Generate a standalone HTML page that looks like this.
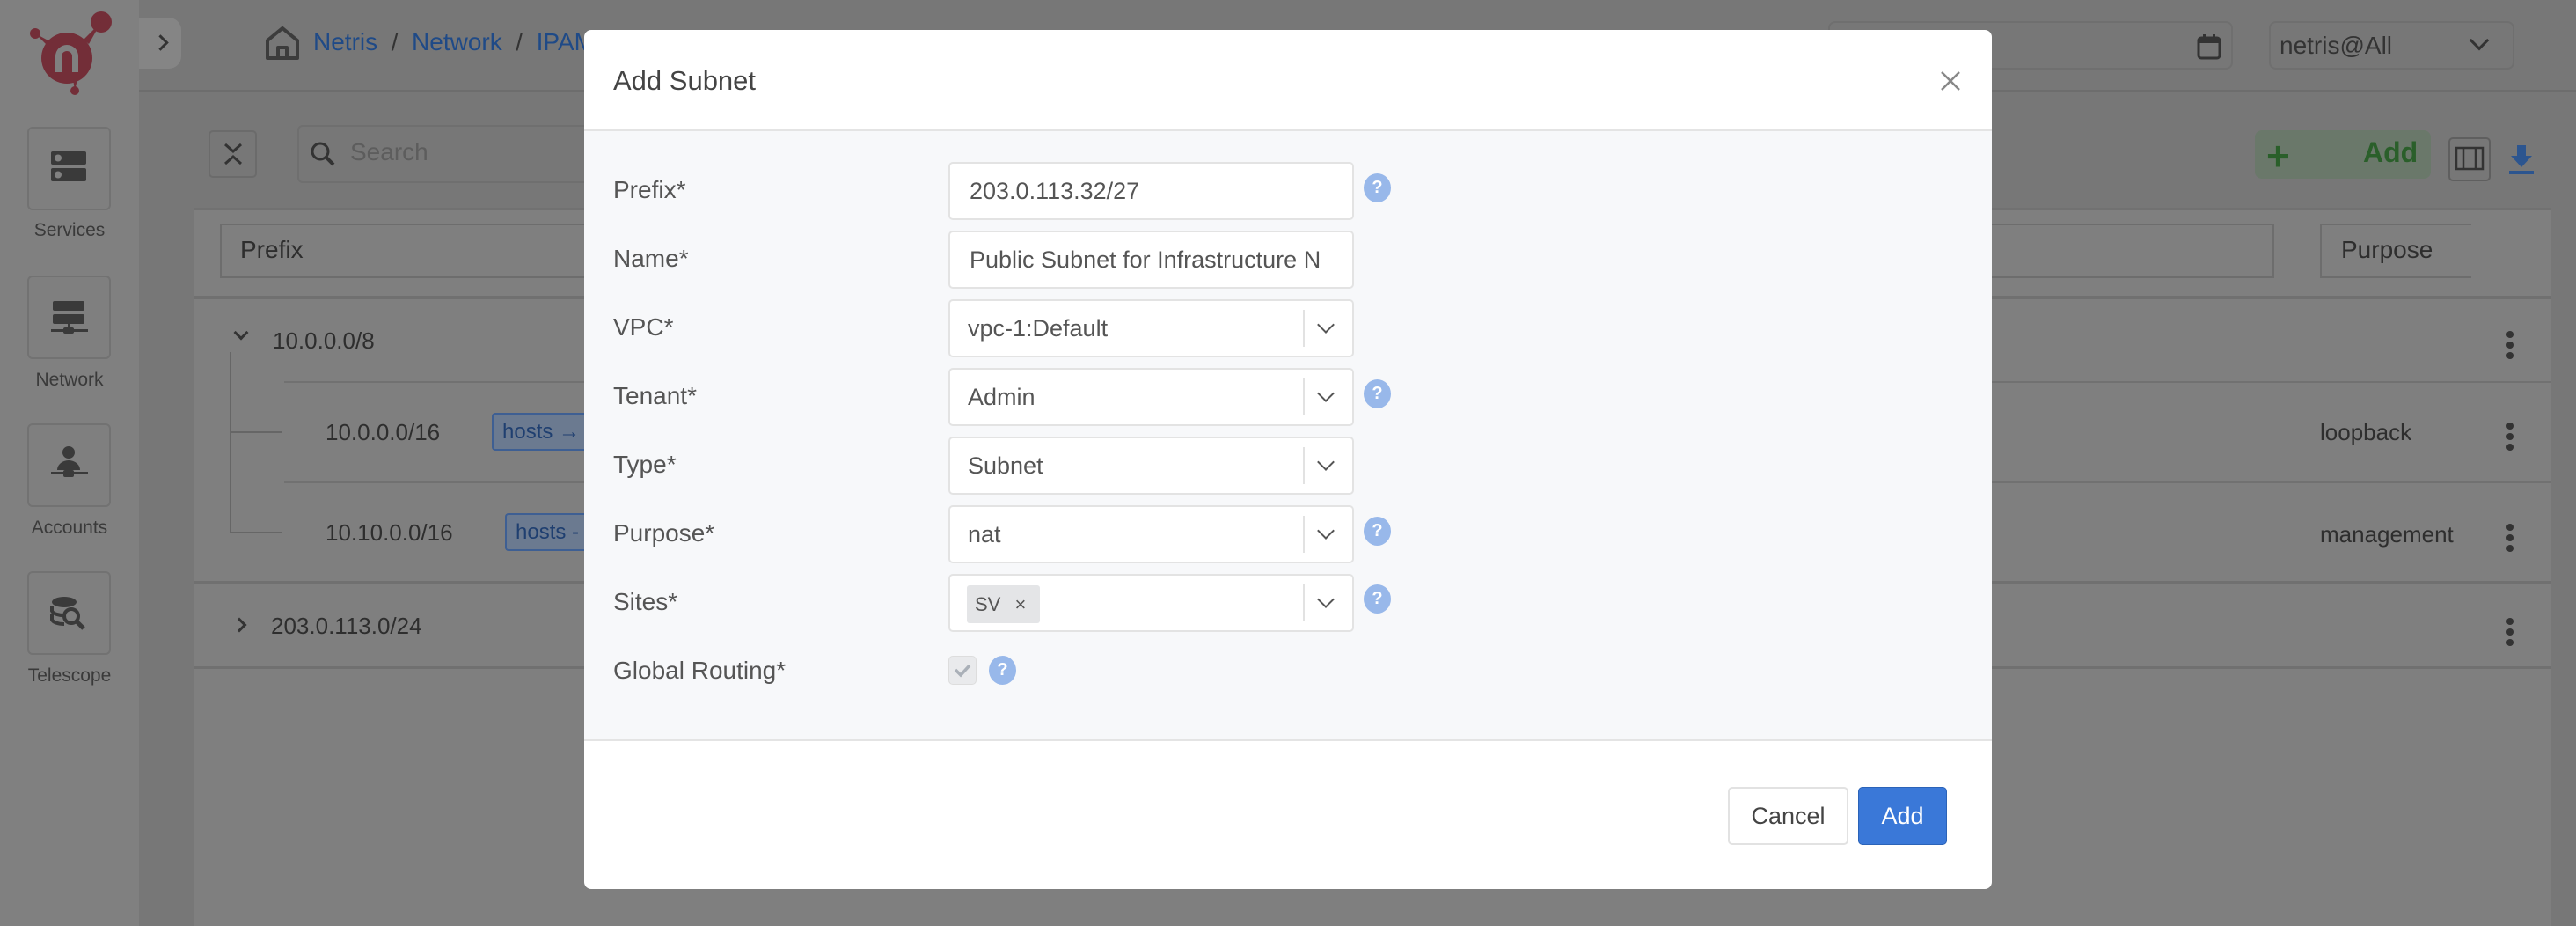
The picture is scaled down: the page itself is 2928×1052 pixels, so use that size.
<!DOCTYPE html>
<html><head><meta charset="utf-8"><style>
*{box-sizing:border-box;margin:0;padding:0}
body{width:2928px;height:1052px;overflow:hidden;background:#777;font-family:"Liberation Sans",sans-serif;position:relative;color:#333}
.a{position:absolute}
.sb{left:0;top:0;width:158px;height:1052px;background:#808080}
.sbi{left:31px;width:95px;height:95px;border:2px solid #727272;border-radius:6px;background:#7f7f7f}
.sbl{left:0;width:158px;text-align:center;font-size:21px;color:#3a3a3a}
.mo{left:664px;top:34px;width:1600px;height:976px;background:#fff;border-radius:8px;overflow:hidden}
.lbl{left:33px;font-size:28px;color:#555}
.inp{left:414px;width:461px;height:66px;border:2px solid #e3e3e3;border-radius:5px;background:#fff;font-size:27px;color:#555;line-height:62px;padding-left:22px;white-space:nowrap;overflow:hidden}
.sel .dv{position:absolute;left:401px;top:10px;width:2px;height:42px;background:#e2e2e2}
.sel .ch{position:absolute;left:420px;top:20px;width:14px;height:14px;border-right:2px solid #555;border-bottom:2px solid #555;transform:rotate(45deg)}
.hp{width:31px;height:33px;border-radius:50%;background:#98b8ea;color:#fff;font-size:20px;font-weight:bold;text-align:center;line-height:33px}
.kb{left:2849px;width:8px}
.kb i{display:block;width:8px;height:8px;border-radius:50%;background:#333;margin-bottom:4px}
.hb{white-space:nowrap;overflow:hidden}
</style></head><body>
<div class="a sb"></div>
<svg class="a" style="left:0;top:0" width="158" height="120"><g fill="#732e38"><circle cx="76" cy="66" r="29"/><circle cx="115" cy="25" r="12"/><circle cx="40" cy="38" r="6"/><circle cx="85" cy="103" r="5"/><path d="M40 38 L62 50 L58 56 Z M115 25 L95 45 L101 50 Z M83 90 L85 103 L88 90Z"/></g><path d="M63 82 V64 a13 13 0 0 1 26 0 V82 h-7 V64 a6 6 0 0 0 -12 0 V82Z" fill="#808080"/></svg>
<div class="a" style="left:158px;top:20px;width:48px;height:58px;background:#858585;border-radius:0 14px 14px 0"></div>
<div class="a" style="left:176px;top:42px;width:13px;height:13px;border-right:3px solid #333;border-top:3px solid #333;transform:rotate(45deg)"></div>
<div class="a" style="left:158px;top:102px;width:2770px;height:2px;background:#6d6d6d"></div>
<svg class="a" style="left:300px;top:28px" width="42" height="42"><path d="M4 38 V18 L21 4 L38 18 V38 Z M16 38 V26 h10 v12" fill="none" stroke="#3c3c3c" stroke-width="4" stroke-linejoin="round"/></svg>
<div class="a" style="left:356px;top:32px;font-size:28px;color:#1f4a87;white-space:nowrap">Netris &nbsp;<span style="color:#333">/</span>&nbsp; Network &nbsp;<span style="color:#333">/</span>&nbsp; IPAM</div>
<div class="a" style="left:2078px;top:24px;width:460px;height:55px;border:2px solid #6f6f6f;border-radius:8px"></div>
<svg class="a" style="left:2497px;top:38px" width="28" height="30"><rect x="2" y="5" width="24" height="23" rx="3" fill="none" stroke="#333" stroke-width="3"/><rect x="2" y="5" width="24" height="6" fill="#333"/><rect x="7" y="1" width="3" height="6" fill="#333"/><rect x="18" y="1" width="3" height="6" fill="#333"/></svg>
<div class="a" style="left:2579px;top:24px;width:279px;height:55px;border:2px solid #6f6f6f;border-radius:8px;font-size:28px;line-height:51px;padding-left:10px;color:#333">netris@All</div>
<div class="a" style="left:2810px;top:38px;width:16px;height:16px;border-right:3px solid #333;border-bottom:3px solid #333;transform:rotate(45deg)"></div>
<div class="a sbi" style="top:144px"></div><svg class="a" style="left:57px;top:170px" width="44" height="40"><rect x="1" y="2" width="40" height="15" rx="2" fill="#3a3a3a"/><rect x="1" y="21" width="40" height="15" rx="2" fill="#3a3a3a"/><circle cx="9" cy="9.5" r="4" fill="#808080"/><circle cx="9" cy="28.5" r="4" fill="#808080"/></svg>
<div class="a sbl" style="top:250px">Services</div>
<div class="a sbi" style="top:313px"></div><svg class="a" style="left:57px;top:340px" width="44" height="42"><rect x="3" y="2" width="36" height="11" rx="2" fill="#3a3a3a"/><rect x="3" y="17" width="36" height="11" rx="2" fill="#3a3a3a"/><rect x="20" y="28" width="3" height="8" fill="#3a3a3a"/><rect x="1" y="34" width="42" height="3" fill="#3a3a3a"/><rect x="15" y="32" width="12" height="7" rx="2" fill="#3a3a3a"/></svg>
<div class="a sbl" style="top:420px">Network</div>
<div class="a sbi" style="top:481px"></div><svg class="a" style="left:57px;top:506px" width="44" height="42"><circle cx="21" cy="8" r="7" fill="#3a3a3a"/><path d="M8 28 a13 11 0 0 1 26 0Z" fill="#3a3a3a"/><rect x="1" y="30" width="42" height="3" fill="#3a3a3a"/><rect x="15" y="28" width="12" height="8" rx="2" fill="#3a3a3a"/></svg>
<div class="a sbl" style="top:588px">Accounts</div>
<div class="a sbi" style="top:649px"></div><svg class="a" style="left:57px;top:676px" width="44" height="42"><ellipse cx="16" cy="8" rx="14" ry="6" fill="#3a3a3a"/><path d="M2 12 v6 a14 6 0 0 0 16 5 M2 22 v6 a14 6 0 0 0 14 5" fill="none" stroke="#3a3a3a" stroke-width="4"/><circle cx="24" cy="24" r="8" fill="none" stroke="#3a3a3a" stroke-width="4"/><path d="M30 30 L38 38" stroke="#3a3a3a" stroke-width="5"/></svg>
<div class="a sbl" style="top:756px">Telescope</div>
<div class="a" style="left:237px;top:148px;width:55px;height:54px;border:2px solid #6b6b6b;border-radius:5px"></div>
<svg class="a" style="left:252px;top:162px" width="26" height="26"><path d="M4 2 L13 10 L22 2 M4 24 L13 16 L22 24" fill="none" stroke="#333" stroke-width="3"/></svg>
<div class="a" style="left:338px;top:142px;width:700px;height:66px;border:2px solid #6f6f6f;border-radius:6px"></div>
<svg class="a" style="left:352px;top:160px" width="30" height="30"><circle cx="12" cy="12" r="9" fill="none" stroke="#333" stroke-width="3"/><path d="M19 19 L27 27" stroke="#333" stroke-width="4"/></svg>
<div class="a" style="left:398px;top:157px;font-size:28px;color:#5d5d5d">Search</div>
<div class="a" style="left:2563px;top:148px;width:200px;height:55px;background:#6a786a;border-radius:8px"></div>
<div class="a" style="left:2576px;top:150px;font-size:46px;font-weight:bold;color:#2a5f2a">+</div>
<div class="a" style="left:2686px;top:155px;font-size:32px;font-weight:bold;color:#2a5f2a">Add</div>
<div class="a" style="left:2783px;top:156px;width:48px;height:50px;border:2px solid #5f5f5f;border-radius:5px"></div>
<svg class="a" style="left:2790px;top:166px" width="34" height="30"><rect x="2" y="2" width="30" height="24" fill="none" stroke="#333" stroke-width="2.5"/><path d="M10 2 V26 M24 2 V26" stroke="#333" stroke-width="2.5"/></svg>
<svg class="a" style="left:2850px;top:165px" width="32" height="36"><path d="M11 0 h10 v12 h7 L16 25 L4 12 h7Z" fill="#2c558f"/><rect x="2" y="29" width="28" height="4" fill="#2c558f"/></svg>
<div class="a" style="left:221px;top:236px;width:2679px;height:816px;background:#7f7f7f;border-top:3px solid #717171"></div>
<div class="a" style="left:250px;top:254px;width:2335px;height:62px;border:2px solid #6d6d6d"></div>
<div class="a" style="left:273px;top:268px;font-size:28px;color:#2e2e2e">Prefix</div>
<div class="a" style="left:2637px;top:254px;width:172px;height:62px;border:2px solid #6d6d6d;border-right:none"></div>
<div class="a" style="left:2661px;top:268px;font-size:28px;color:#2e2e2e">Purpose</div>
<div class="a" style="left:221px;top:336px;width:2679px;height:4px;background:#707070"></div>
<div class="a" style="left:323px;top:433px;width:2577px;height:2px;background:#717171"></div>
<div class="a" style="left:323px;top:547px;width:2577px;height:2px;background:#717171"></div>
<div class="a" style="left:221px;top:660px;width:2679px;height:3px;background:#707070"></div>
<div class="a" style="left:221px;top:757px;width:2679px;height:3px;background:#707070"></div>
<div class="a" style="left:261px;top:400px;width:2px;height:206px;background:#666"></div>
<div class="a" style="left:261px;top:490px;width:60px;height:2px;background:#666"></div>
<div class="a" style="left:261px;top:604px;width:60px;height:2px;background:#666"></div>
<div class="a" style="left:268px;top:372px;width:12px;height:12px;border-right:3px solid #333;border-bottom:3px solid #333;transform:rotate(45deg)"></div>
<div class="a" style="left:310px;top:372px;font-size:26px;color:#2e2e2e">10.0.0.0/8</div>
<div class="a" style="left:370px;top:476px;font-size:26px;color:#2e2e2e">10.0.0.0/16</div>
<div class="a hb" style="left:559px;top:469px;width:106px;height:43px;background:#6b7a90;border:2px solid #3e5f93;border-right:none;border-radius:4px 0 0 4px;font-size:24px;color:#1f3f70;padding:6px 10px">hosts →</div>
<div class="a" style="left:370px;top:590px;font-size:26px;color:#2e2e2e">10.10.0.0/16</div>
<div class="a hb" style="left:574px;top:583px;width:91px;height:43px;background:#6b7a90;border:2px solid #3e5f93;border-right:none;border-radius:4px 0 0 4px;font-size:24px;color:#1f3f70;padding:6px 10px">hosts -</div>
<div class="a" style="left:266px;top:704px;width:12px;height:12px;border-right:3px solid #333;border-top:3px solid #333;transform:rotate(45deg)"></div>
<div class="a" style="left:308px;top:696px;font-size:26px;color:#2e2e2e">203.0.113.0/24</div>
<div class="a" style="left:2637px;top:476px;font-size:26px;color:#2e2e2e">loopback</div>
<div class="a" style="left:2637px;top:592px;font-size:26px;color:#2e2e2e">management</div>
<div class="a kb" style="top:376px"><i></i><i></i><i></i></div>
<div class="a kb" style="top:480px"><i></i><i></i><i></i></div>
<div class="a kb" style="top:595px"><i></i><i></i><i></i></div>
<div class="a kb" style="top:702px"><i></i><i></i><i></i></div>

<div class="a mo">
 <div class="a" style="left:33px;top:40px;font-size:31px;color:#444">Add Subnet</div>
 <svg class="a" style="left:1541px;top:46px" width="24" height="24"><path d="M2 2 L22 22 M22 2 L2 22" stroke="#888" stroke-width="2.5"/></svg>
 <div class="a" style="left:0;top:113px;width:1600px;height:695px;background:#f7f8fa;border-top:2px solid #e4e4e4;border-bottom:2px solid #e4e4e4"></div>
 <div class="a lbl" style="top:166px">Prefix*</div>
 <div class="a inp" style="top:150px">203.0.113.32/27</div>
 <div class="a hp" style="left:886px;top:163px">?</div>
 <div class="a lbl" style="top:244px">Name*</div>
 <div class="a inp" style="top:228px">Public Subnet for Infrastructure N</div>
 <div class="a lbl" style="top:322px">VPC*</div>
 <div class="a inp sel" style="top:306px;padding-left:20px">vpc-1:Default<span class="dv"></span><span class="ch"></span></div>
 <div class="a lbl" style="top:400px">Tenant*</div>
 <div class="a inp sel" style="top:384px;padding-left:20px">Admin<span class="dv"></span><span class="ch"></span></div>
 <div class="a hp" style="left:886px;top:397px">?</div>
 <div class="a lbl" style="top:478px">Type*</div>
 <div class="a inp sel" style="top:462px;padding-left:20px">Subnet<span class="dv"></span><span class="ch"></span></div>
 <div class="a lbl" style="top:556px">Purpose*</div>
 <div class="a inp sel" style="top:540px;padding-left:20px">nat<span class="dv"></span><span class="ch"></span></div>
 <div class="a hp" style="left:886px;top:553px">?</div>
 <div class="a lbl" style="top:634px">Sites*</div>
 <div class="a inp sel" style="top:618px;padding-left:0"><span style="position:absolute;left:19px;top:11px;width:83px;height:43px;background:#e4e5e7;border-radius:3px;font-size:22px;line-height:43px;padding-left:9px;color:#555">SV <span style="margin-left:10px">×</span></span><span class="dv"></span><span class="ch"></span></div>
 <div class="a hp" style="left:886px;top:630px">?</div>
 <div class="a lbl" style="top:712px">Global Routing*</div>
 <div class="a" style="left:414px;top:711px;width:32px;height:33px;border:1px solid #ddd;border-radius:5px;background:#e9eaec"></div>
 <svg class="a" style="left:419px;top:718px" width="22" height="18"><path d="M3 9 L9 15 L19 4" fill="none" stroke="#aab0b8" stroke-width="3.5"/></svg>
 <div class="a hp" style="left:460px;top:711px">?</div>
 <div class="a" style="left:1300px;top:860px;width:137px;height:66px;border:2px solid #e2e2e2;border-radius:5px;background:#fff;font-size:27px;color:#444;text-align:center;line-height:62px">Cancel</div>
 <div class="a" style="left:1448px;top:860px;width:101px;height:66px;border:1px solid #2b63b8;border-radius:5px;background:#3a78d8;font-size:27px;color:#fff;text-align:center;line-height:64px">Add</div>
</div>
</body></html>
